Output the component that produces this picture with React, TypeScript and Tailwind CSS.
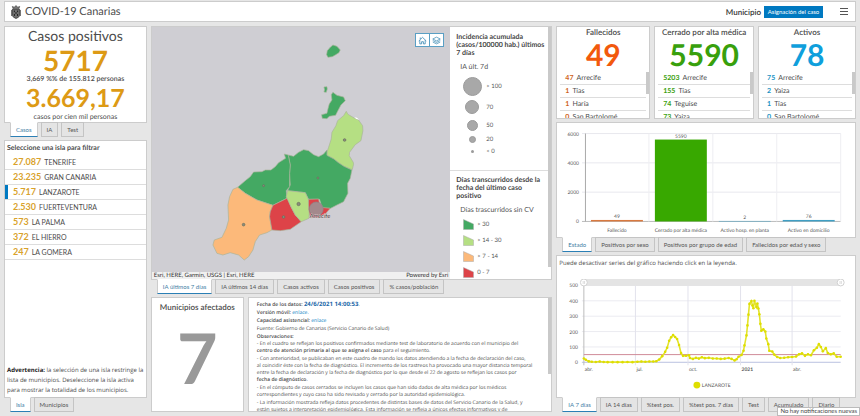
import { useState } from "react";
import type { ReactNode } from "react";
import clsx from "clsx";

const ISLANDS = [
  { name: "TENERIFE", cases: "27.087" },
  { name: "GRAN CANARIA", cases: "23.235" },
  { name: "LANZAROTE", cases: "5.717" },
  { name: "FUERTEVENTURA", cases: "2.530" },
  { name: "LA PALMA", cases: "573" },
  { name: "EL HIERRO", cases: "372" },
  { name: "LA GOMERA", cases: "247" },
];

const COUNTERS = [
  {
    title: "Fallecidos",
    total: "49",
    color: "text-[#f2590d]",
    rowColor: "text-[#cf6220]",
    rows: [["47", "Arrecife"], ["1", "Tías"], ["1", "Haría"], ["0", "San Bartolomé"]],
  },
  {
    title: "Cerrado por alta médica",
    total: "5590",
    color: "text-[#38a00c]",
    rowColor: "text-[#38a00c]",
    rows: [["5203", "Arrecife"], ["155", "Tías"], ["74", "Teguise"], ["73", "Yaiza"]],
  },
  {
    title: "Activos",
    total: "78",
    color: "text-[#0f9fdc]",
    rowColor: "text-[#1b93c4]",
    rows: [["75", "Arrecife"], ["2", "Yaiza"], ["1", "Tías"], ["0", "San Bartolomé"]],
  },
];

const BARS = [
  { label: "Fallecido", value: 49, color: "#d9793f" },
  { label: "Cerrado por alta médica", value: 5590, color: "#38a800" },
  { label: "Activo hosp. en planta", value: 2, color: "#4aa3c7" },
  { label: "Activo en domicilio", value: 76, color: "#3f9fc4" },
];

const REGIONS = [
  { fill: "#44a963", d: "525,71 534,61 542,54 554,58 564,69 560,77 549,84 540,89 527,91 523,83" },
  { fill: "#44a963", d: "515,180 524,179 525,186 522,196 515,195 517,188" },
  { fill: "#44a963", d: "542,196 554,205 574,210 579,221 566,234 556,253 550,265 531,268 524,275 510,274 508,263 524,259 527,246 531,231 539,219 537,203" },
  { fill: "#b5df83", d: "582,253 587,262 606,273 619,279 631,296 632,311 626,341 609,353 592,376 591,386 603,406 604,412 600,428 575,418 557,406 545,396 524,385 524,376 529,361 537,336 539,316 551,296 556,281 574,266" },
  { fill: "#44a963", d: "408,384 424,388 439,376 454,368 469,371 484,383 499,389 514,381 524,369 524,385 545,396 557,406 575,418 599,429 594,454 586,469 587,499 574,524 554,534 535,544 510,543 502,517 469,517 459,497 406,491 414,474 412,439 414,414" },
  { fill: "#44a963", d: "408,384 396,381 400,394 379,407 369,419 356,429 339,429 329,434 304,435 294,449 279,461 264,474 256,481 279,499 314,519 362,535 404,514 402,491 412,479 412,439 414,414" },
  { fill: "#fcb97a", d: "256,481 242,487 232,509 227,534 229,579 222,604 209,631 186,639 182,654 194,679 212,684 234,677 259,684 276,699 289,689 302,669 309,644 322,624 344,617 359,609 352,569 354,554 362,535 314,519 279,499" },
  { fill: "#dd4348", d: "362,535 406,513 416,539 429,564 447,584 414,607 384,611 359,609 352,569 354,554" },
  { fill: "#b5df83", d: "406,491 459,497 469,519 472,547 470,574 447,584 429,564 416,539 402,509" },
  { fill: "#dd4348", d: "469,517 499,516 504,541 534,544 519,561 499,571 474,572 469,547" },
];

const MARKERS = [[577, 339, 4], [334, 476, 3], [497, 453, 3], [274, 593, 4], [394, 570, 4], [439, 531, 5]];

// [x, incidence] pairs, x in chart units
const SERIES = [
  [26, 25], [28, 16], [31, 6], [34, 4], [38, 2], [42, 5], [46, 2], [50, 1], [55, 1], [60, 1], [65, 1], [70, 2], [75, 1],
  [80, 3], [84, 5], [88, 4], [92, 5], [96, 5], [99, 7], [102, 18], [105, 40], [108, 68], [110, 95], [112, 140],
  [114, 163], [116, 178], [118, 165], [120, 152], [122, 112], [124, 60], [126, 42], [129, 43], [132, 46], [133, 28],
  [136, 22], [139, 29], [142, 24], [145, 33], [148, 27], [152, 29], [156, 25], [160, 25], [164, 22], [168, 24],
  [172, 28], [175, 22], [178, 12], [180, 20], [182, 36], [185, 48], [187, 75], [188, 110], [190, 175], [191, 240],
  [192, 310], [193, 380], [195, 398], [196, 370], [197, 352], [198, 400], [200, 360], [201, 382], [202, 350],
  [203, 312], [204, 250], [205, 205], [207, 215], [209, 200], [210, 155], [212, 118], [213, 75], [216, 70],
  [218, 50], [221, 34], [224, 28], [228, 30], [232, 33], [236, 35], [240, 38], [243, 52], [246, 58], [249, 42],
  [252, 52], [255, 46], [258, 78], [261, 95], [263, 118], [265, 100], [267, 72], [270, 92], [272, 60],
  [275, 52], [278, 58], [281, 36], [285, 36],
];

function Panel({ className, children }: { className?: string; children: ReactNode }) {
  return <section className={clsx("relative min-h-0 overflow-hidden border border-[#cccccc] bg-white", className)}>{children}</section>;
}

function Tabs({ items }: { items: string[] }) {
  const [active, setActive] = useState(items[0]);
  return (
    <div role="tablist" className="relative z-10 -mt-px flex h-[15px] shrink-0 gap-[3px] pl-[6px]">
      {items.map((item) => (
        <button
          key={item}
          role="tab"
          aria-selected={item === active}
          onClick={() => setActive(item)}
          className={clsx(
            "whitespace-nowrap border px-[5px] text-[6px] leading-[11px]",
            item === active
              ? "border-x-[#cccccc] border-t-white border-b-[#2b7fb5] bg-white text-[#3f7ea5]"
              : "border-[#c4c4c4] bg-[#e4e4e4] text-[#555555]"
          )}
        >
          {item}
        </button>
      ))}
    </div>
  );
}

function Crest() {
  return (
    <svg viewBox="0 0 10 14" className="h-[14px] w-[10px]" fill="none" stroke="#3f3f3f">
      <path d="M2 3.6 1.3 1.4 3.2 2.2 5 .6l1.8 1.6 1.9-.8L8 3.6Z" fill="#777" strokeWidth=".6" />
      <path d="M1.4 4.3h7.2v6.2Q8 12.6 5 13.4 2 12.6 1.4 10.5Z" fill="#707070" strokeWidth=".9" />
      <path d="M3.4 5.5v1.6M6.6 5.5v1.6M5 7v2M3.4 9v2M6.6 9v2" stroke="#222" strokeWidth="1" />
      <path d="M.5 5v6M9.5 5v6" strokeWidth=".7" />
    </svg>
  );
}

function IslandMap() {
  return (
    <div className="relative flex min-w-0 flex-1 flex-col bg-[#cfced3]">
      <svg viewBox="0 0 894 735" className="min-h-0 w-full flex-1">
        {REGIONS.map((r) => (
          <polygon key={r.d} points={r.d} fill={r.fill} stroke="#a9b39a" strokeWidth="2" strokeLinejoin="round" />
        ))}
        <path d="M606 271l8 1 7 6-9-2Z" fill="#fff" />
        {MARKERS.map(([x, y, r]) => (
          <circle key={x} cx={x} cy={y} r={r} fill="#8b8b7c" stroke="#66705c" strokeWidth="2" />
        ))}
        <circle cx="492" cy="546" r="21" fill="#a3898c" stroke="#8d8588" strokeWidth="2" />
        <text x="472" y="572" fontSize="18" fill="#444" stroke="#e8d5d5" strokeWidth="2" paintOrder="stroke">Arrecife</text>
      </svg>
      <div className="absolute right-[6px] top-[6px] flex border border-[#5a9fc4] bg-white">
        <button aria-label="Inicio" className="flex h-[12px] w-[13px] items-center justify-center">
          <svg viewBox="0 0 12 12" className="h-[9px] w-[9px]" fill="none" stroke="#3f8cb5" strokeWidth="1.1">
            <path d="M1 6.6 6 1.8l5 4.8M2.4 5.5v5h2.4V7.6h2.4v2.9h2.4v-5M3 4V2" />
          </svg>
        </button>
        <button aria-label="Capas" className="flex h-[12px] w-[14px] items-center justify-center border-l border-[#5a9fc4]">
          <svg viewBox="0 0 12 12" className="h-[9px] w-[9px]" fill="none" stroke="#3f8cb5" strokeWidth="1">
            <path d="M6 1.5 11 4 6 6.5 1 4ZM1 6l5 2.5L11 6M1 8l5 2.5L11 8" />
          </svg>
        </button>
      </div>
      <div className="flex h-[7px] items-center justify-between bg-[#f0f0f0] px-[2px] text-[6px] leading-[7px] text-[#323232]">
        <span>Esri, HERE, Garmin, USGS | Esri, HERE</span>
        <span>Powered by Esri</span>
      </div>
    </div>
  );
}

function Legend() {
  return (
    <aside className="relative w-[101px] shrink-0 overflow-hidden bg-white text-[7px] text-[#555555]">
      <div className="h-[144px] border-b border-[#dddddd] pl-[6px] pr-[4px] pt-[6px]">
        <h3 className="whitespace-nowrap font-bold leading-[8px] text-[#444444]">
          Incidencia acumulada
          <br />
          (casos/100000 hab.) últimos
          <br />7 días
        </h3>
        <p className="mt-[6px] pl-[4px] leading-[8px]">IA últ. 7d</p>
        <div className="mt-[4px] grid grid-cols-[28px_1fr] grid-rows-[22px_20px_16px_12px_12px] items-center pl-[2px] text-[6px]">
          <i className="h-[19px] w-[19px] justify-self-center rounded-full border border-[#9b9b9b] bg-[#a8a8a8]" />
          <span>&gt; 100</span>
          <i className="h-[14px] w-[14px] justify-self-center rounded-full border border-[#9b9b9b] bg-[#a8a8a8]" />
          <span>70</span>
          <i className="h-[11px] w-[11px] justify-self-center rounded-full border border-[#9b9b9b] bg-[#a8a8a8]" />
          <span>50</span>
          <i className="h-[7px] w-[7px] justify-self-center rounded-full border border-[#9b9b9b] bg-[#a8a8a8]" />
          <span>20</span>
          <i className="h-[3px] w-[3px] justify-self-center rounded-full bg-[#9b9b9b]" />
          <span>&lt; 0</span>
        </div>
      </div>
      <div className="pl-[6px] pr-[4px] pt-[5px]">
        <h3 className="whitespace-nowrap font-bold leading-[8px] text-[#444444]">
          Días transcurridos desde la
          <br />
          fecha del último caso
          <br />
          positivo
        </h3>
        <p className="mt-[6px] pl-[4px] leading-[8px]">Días trascurridos sin CV</p>
        <ul className="mt-[2px] pl-[7px] text-[6px]">
          {[["#44a963", "> 30"], ["#b5df83", "> 14 - 30"], ["#fcb97a", "> 7 - 14"], ["#dd4348", "0 - 7"]].map(([color, label]) => (
            <li key={label} className="flex h-[16px] items-center gap-[3px]">
              <svg viewBox="0 0 11 11" className="h-[11px] w-[11px]">
                <path d="M.5.5 10.5 5v5.5H.5Z" fill={color} stroke="#aaa" strokeWidth=".5" />
              </svg>
              {label}
            </li>
          ))}
        </ul>
      </div>
      <div className="absolute bottom-[12px] right-0 top-0 w-[3px] bg-[#c9c9c9]" />
    </aside>
  );
}

function StatusChart() {
  return (
    <svg viewBox="0 0 298 113" className="h-full w-full" fontSize="6" fill="#555">
      {[0, 2000, 4000, 6000].map((v) => {
        const y = 98 - (v / 6000) * 88;
        return (
          <g key={v}>
            <path d={`M25 ${y}h259`} stroke={v ? "#e8e8ee" : "#bbb"} />
            <text x="22" y={y + 2} textAnchor="end" fontSize="5">{v}</text>
          </g>
        );
      })}
      {[92, 156, 220, 284].map((x) => (
        <path key={x} d={`M${x} 10v88`} stroke="#eeeef2" />
      ))}
      <path d="M28.500 10v88" stroke="#aaa" />
      {BARS.map((b, i) => {
        const h = Math.max((b.value / 6000) * 88, b.value > 10 ? 1.5 : 0.5);
        return (
          <g key={b.label} textAnchor="middle" fontSize="5">
            <rect x={34 + i * 64} y={98 - h} width="52" height={h} fill={b.color} />
            <text x={60 + i * 64} y={96 - h}>{b.value}</text>
            <text x={60 + i * 64} y="109">{b.label}</text>
          </g>
        );
      })}
    </svg>
  );
}

function IncidenceChart() {
  const y = (v: number) => 84 - v * 0.155;
  return (
    <svg viewBox="0 0 298 119" className="min-h-0 w-full flex-1" fontSize="5" fill="#555">
      {[0, 100, 200, 300, 400, 500].map((v) => (
        <g key={v}>
          <path d={`M24 ${y(v)}h261`} stroke={v ? "#ebebf1" : "#b9c0e0"} />
          <text x="20" y={y(v) + 2} textAnchor="end">{v}</text>
        </g>
      ))}
      {[78, 131, 184, 236].map((x) => (
        <path key={x} d={`M${x} 7v80`} stroke="#e2e2ec" />
      ))}
      <path d="M26 7v80" stroke="#bbb" />
      <rect x="26" y="0" width="259" height="7" fill="#e4e4e4" />
      {[26, 285].map((x) => (
        <g key={x}>
          <circle cx={x} cy="3.500" r="3.500" fill="#fff" stroke="#d0d0d0" />
          <path d={`M${x - 0.7} 2v3M${x + 0.7} 2v3`} stroke="#bbb" strokeWidth=".5" />
        </g>
      ))}
      <path d={`M26 ${y(50)}h259`} stroke="#cf8a98" />
      <polyline points={SERIES.map(([x, v]) => `${x},${y(v)}`).join(" ")} fill="none" stroke="#e3e32c" strokeWidth="1.6" />
      {SERIES.map(([x, v]) => (
        <circle key={x} cx={x} cy={y(v)} r="1.3" fill="#dede00" />
      ))}
      <text x="27" y="93">abr.</text>
      <text x="79" y="93">jul.</text>
      <text x="132" y="93">oct.</text>
      <text x="185" y="93" fontWeight="700">2021</text>
      <text x="237" y="93">abr.</text>
      <circle cx="140" cy="107" r="3.500" fill="#dede00" />
      <text x="145" y="109">LANZAROTE</text>
    </svg>
  );
}

function Notes() {
  return (
    <Panel className="flex-1 whitespace-nowrap pl-[8px] pr-[5px] pt-[2px] font-['Open_Sans','Lato',sans-serif] text-[5px]">
      <div className="leading-[8px]">
        <p>
          <b className="font-semibold">Fecha de los datos:</b> <b className="text-[6px] leading-[8px] text-[#1b67a8]">24/6/2021 14:00:53</b>.
        </p>
        <p><b className="font-semibold">Versión móvil:</b> <a href="#movil" className="text-[#0079c1]">enlace.</a></p>
        <p><b className="font-semibold">Capacidad asistencial:</b> <a href="#capacidad" className="text-[#0079c1]">enlace</a></p>
        <p>Fuente: Gobierno de Canarias (Servicio Canario de Salud)</p>
        <p><b className="font-semibold">Observaciones:</b></p>
      </div>
      <div className="space-y-px leading-[7px]">
        <p>
          - En el cuadro se reflejan los positivos confirmados mediante test de laboratorio de acuerdo con el municipio del
          <br />
          <b className="font-semibold">centro de atención primaria al que se asigna el caso</b> para el seguimiento.
        </p>
        <p>
          - Con anterioridad, se publicaban en este cuadro de mando los datos atendiendo a la fecha de declaración del caso,
          <br />
          al coincidir éste con la fecha de diagnóstico. El incremento de los rastreos ha provocado una mayor distancia temporal
          <br />
          entre la fecha de declaración y la fecha de diagnóstico por lo que desde el 22 de agosto se reflejan los casos por
          <br />
          <b className="font-semibold">fecha de diagnóstico</b>.
        </p>
        <p>
          - En el cómputo de casos cerrados se incluyen los casos que han sido dados de alta médica por los médicos
          <br />
          correspondientes y cuyo caso ha sido revisado y cerrado por la autoridad epidemiológica.
        </p>
        <p>
          - La información mostrada refleja datos procedentes de distintas bases de datos del Servicio Canario de la Salud, y
          <br />
          están sujetos a interpretación epidemiológica. Esta información se refleja a únicos efectos informativos y de
        </p>
      </div>
      <div className="absolute right-0 top-0 h-[76px] w-[3px] bg-[#c9c9c9]" />
    </Panel>
  );
}

export default function App() {
  const [island, setIsland] = useState("LANZAROTE");

  return (
    <div className="flex h-screen flex-col gap-[4px] overflow-hidden bg-[#e6e6e6] px-[4px] pb-[4px] pt-px font-['Lato','Open_Sans',sans-serif] text-[#4c4c4c] [text-rendering:geometricPrecision]">
      <header className="flex h-[21px] shrink-0 items-center border border-[#cccccc] bg-white px-[6px]">
        <Crest />
        <h1 className="ml-[4px] text-[11px] leading-[16px]">COVID-19 Canarias</h1>
        <div className="ml-auto flex items-center">
          <span className="text-[8px] font-semibold text-[#333333]">Municipio</span>
          <button className="ml-[3px] h-[12px] w-[59px] bg-[#0079c1] text-[6px] leading-[12px] text-white">Asignación del caso</button>
          <button aria-label="Menú" className="ml-[17px] mr-px flex w-[8px] flex-col gap-[2px]">
            <i className="h-px w-full bg-[#555555]" />
            <i className="h-px w-full bg-[#555555]" />
            <i className="h-px w-full bg-[#555555]" />
          </button>
        </div>
      </header>

      <main className="grid min-h-0 flex-1 grid-cols-[143fr_402fr_300fr] gap-[4px]">
        {/* Casos e islas */}
        <div className="flex min-h-0 min-w-0 flex-col">
          <Panel className="h-[97px] shrink-0 text-center">
            <h2 className="text-[14px] leading-[18px]">Casos positivos</h2>
            <p className="text-[28px] font-bold leading-[30px] text-[#dd9a15]">5717</p>
            <p className="text-[7px] font-semibold leading-[8px]">3,669 %% de 155.812 personas</p>
            <p className="text-[25px] font-bold leading-[30px] text-[#dd9a15]">3.669,17</p>
            <p className="text-[7px] leading-[8px]">casos por cien mil personas</p>
          </Panel>
          <Tabs items={["Casos", "IA", "Test"]} />
          <Panel className="mt-[3px] flex flex-1 flex-col">
            <h3 className="px-[2px] pt-[3px] text-[7px] font-bold leading-[9px]">Seleccione una isla para filtrar</h3>
            <ul className="mt-[2px]">
              {ISLANDS.map(({ name, cases }) => (
                <li key={name} className="border-b border-[#dddddd]">
                  <button
                    onClick={() => setIsland(name)}
                    className={clsx(
                      "flex h-[14px] w-full items-center gap-[3px] border-l-[3px] pl-[5px] text-[7px] leading-[14px]",
                      name === island ? "border-[#0079c1]" : "border-transparent"
                    )}
                  >
                    <b className="text-[9px] text-[#d9a22b]">{cases}</b>
                    <span>{name}</span>
                  </button>
                </li>
              ))}
            </ul>
            <p className="mt-auto whitespace-nowrap px-[2px] pb-[2px] font-['Open_Sans','Lato',sans-serif] text-[6px] leading-[10px]">
              <b className="text-[#222222]">Advertencia:</b> la selección de una isla restringe la
              <br />
              lista de municipios. Deseleccione la isla activa
              <br />
              para mostrar la totalidad de los municipios.
            </p>
          </Panel>
          <Tabs items={["Isla", "Municipios"]} />
        </div>

        {/* Mapa */}
        <div className="flex min-h-0 min-w-0 flex-col">
          <Panel className="flex flex-1">
            <IslandMap />
            <Legend />
          </Panel>
          <Tabs items={["IA últimos 7 días", "IA últimos 14 días", "Casos activos", "Casos positivos", "% casos/población"]} />
          <div className="mt-[3px] flex h-[115px] shrink-0 gap-[4px]">
            <Panel className="w-[93px] shrink-0 text-center">
              <h2 className="mt-[4px] text-[8px] font-semibold leading-[10px]">Municipios afectados</h2>
              <p className="mt-[10px] text-[70px] font-bold leading-[70px] text-[#999999]">7</p>
            </Panel>
            <Notes />
          </div>
        </div>

        {/* Contadores y gráficos */}
        <div className="flex min-h-0 min-w-0 flex-col">
          <div className="grid h-[93px] shrink-0 grid-cols-[94fr_100fr_98fr] gap-[4px]">
            {COUNTERS.map((c) => (
              <Panel key={c.title}>
                <h2 className="whitespace-nowrap text-center text-[8px] font-semibold leading-[10px]">{c.title}</h2>
                <p className={clsx("mt-[3px] text-center text-[30px] font-bold leading-[30px]", c.color)}>{c.total}</p>
                <ul className="mx-[3px] mt-[2px]">
                  {c.rows.map(([n, place]) => (
                    <li key={place} className="flex h-[13px] items-center gap-[3px] border-b border-[#dddddd] pl-[5px] text-[7px]">
                      <b className={c.rowColor}>{n}</b>
                      {place}
                    </li>
                  ))}
                </ul>
                <div className="absolute right-0 top-[45px] h-[22px] w-[3px] bg-[#c9c9c9]" />
              </Panel>
            ))}
          </div>
          <Panel className="mt-[3px] h-[116px] shrink-0">
            <StatusChart />
          </Panel>
          <Tabs items={["Estado", "Positivos por sexo", "Positivos por grupo de edad", "Fallecidos por edad y sexo"]} />
          <Panel className="mt-[3px] flex flex-1 flex-col">
            <p className="px-[2px] pt-[3px] font-['Open_Sans','Lato',sans-serif] text-[6px] leading-[8px]">
              Puede desactivar series del gráfico haciendo click en la leyenda.
            </p>
            <div className="flex min-h-0 flex-1 pt-[12px]">
              <IncidenceChart />
            </div>
          </Panel>
          <Tabs items={["IA 7 días", "IA 14 días", "%test pos.", "%test pos. 7 días", "Test", "Acumulado", "Diario"]} />
        </div>
      </main>

      <div role="status" className="fixed bottom-0 right-0 z-20 border border-[#bbbbbb] bg-white px-[2px] text-[6px] leading-[7px] text-[#444444]">
        No hay notificaciones nuevas
      </div>
    </div>
  );
}
